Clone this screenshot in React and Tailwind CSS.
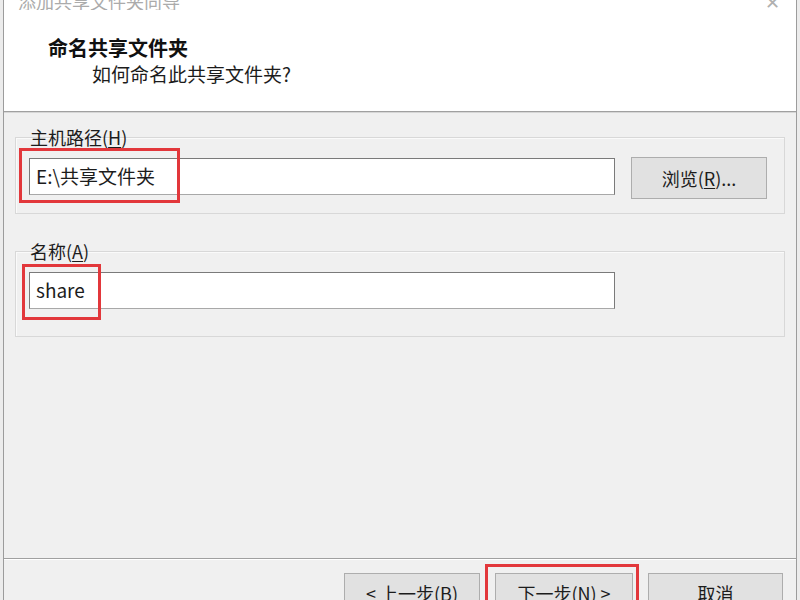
import React from 'react';

const font = "font-['Noto_Sans_CJK_SC','Microsoft_YaHei',sans-serif]";

// red highlight box drawn over a control
const Mark = ({ className }) => (
  <div className={`pointer-events-none absolute border-[3px] border-[#e2373b] ${className}`} />
);

const Field = ({ value, mark }) => (
  <div className="relative">
    <div className="flex h-[37px] w-[586px] items-center border border-[#7a7a7a] border-b-[#a8a8a8] bg-white pl-[6px] text-[19px] text-[#1c1c1c]">
      {value}
    </div>
    {mark}
  </div>
);

const Button = ({ children, width }) => (
  <button className={`flex h-[40px] ${width} items-center justify-center border border-[#adadad] bg-[#e1e1e1] text-[18px] text-[#1c1c1c]`}>
    {children}
  </button>
);

export default function App() {
  return (
    <div className={`h-[600px] w-[800px] overflow-hidden bg-[#ececec] ${font}`}>
      <div className="ml-[3px] flex h-[640px] w-[794px] flex-col border-x border-[#9c9c9c]">
        {/* Header */}
        <div className="bg-white">
          <div className="flex h-[10px] items-end justify-between overflow-hidden pl-[14px] pr-[16px]">
            <span className="text-[18px] leading-[18px] text-[#ababab]">添加共享文件夹向导</span>
            <span className="text-[18px] leading-[18px] text-[#b0b0b0]">✕</span>
          </div>
          <div className="h-[101px] pl-[44px] pt-[25px]">
            <div className="text-[20px] font-bold leading-[26px] text-[#111]">命名共享文件夹</div>
            <div className="pl-[44px] text-[19px] leading-[26px] text-[#1c1c1c]">如何命名此共享文件夹?</div>
          </div>
        </div>
        <div className="h-[2px] border-t border-[#a0a0a0] bg-[#d6d6d6]" />

        {/* Body */}
        <div className="h-[445px] bg-[#f0f0f0] pt-[24px]">
          <div className="ml-[11px] mr-[11px] border border-[#d8d8d8] pb-[14px] pl-[13px] shadow-[inset_1px_1px_0_#fafafa]">
            <div className="-mt-[12px] ml-[1px] text-[18px] leading-[22px] text-[#1c1c1c]">
              主机路径(<span className="underline underline-offset-2">H</span>)
            </div>
            <div className="mt-[9px] flex items-start gap-[16px]">
              <div className="mt-[1px]">
                <Field value="E:\共享文件夹" mark={<Mark className="-left-[10px] -top-[10px] h-[55px] w-[161px]" />} />
              </div>
              <Button width="w-[136px] h-[42px]">
                浏览(<span className="underline underline-offset-2">R</span>)...
              </Button>
            </div>
          </div>

          <div className="ml-[11px] mr-[11px] mt-[37px] border border-[#d8d8d8] pb-[27px] pl-[13px] shadow-[inset_1px_1px_0_#fafafa]">
            <div className="-mt-[12px] ml-[1px] text-[18px] leading-[22px] text-[#1c1c1c]">
              名称(<span className="underline underline-offset-2">A</span>)
            </div>
            <div className="mt-[10px]">
              <Field value="share" mark={<Mark className="-left-[7px] -top-[8px] h-[56px] w-[79px]" />} />
            </div>
          </div>
        </div>
        <div className="h-[2px] border-t border-[#a0a0a0] bg-white" />

        {/* Footer */}
        <div className="flex flex-1 justify-end gap-[15px] bg-[#f0f0f0] pr-[13px] pt-[13px]">
          <Button width="w-[136px]">&lt; 上一步(B)</Button>
          <div className="relative">
            <Button width="w-[138px]">下一步(N) &gt;</Button>
            <Mark className="-left-[10px] -right-[6px] -top-[9px] h-[60px]" />
          </div>
          <Button width="w-[135px]">取消</Button>
        </div>
      </div>
    </div>
  );
}
